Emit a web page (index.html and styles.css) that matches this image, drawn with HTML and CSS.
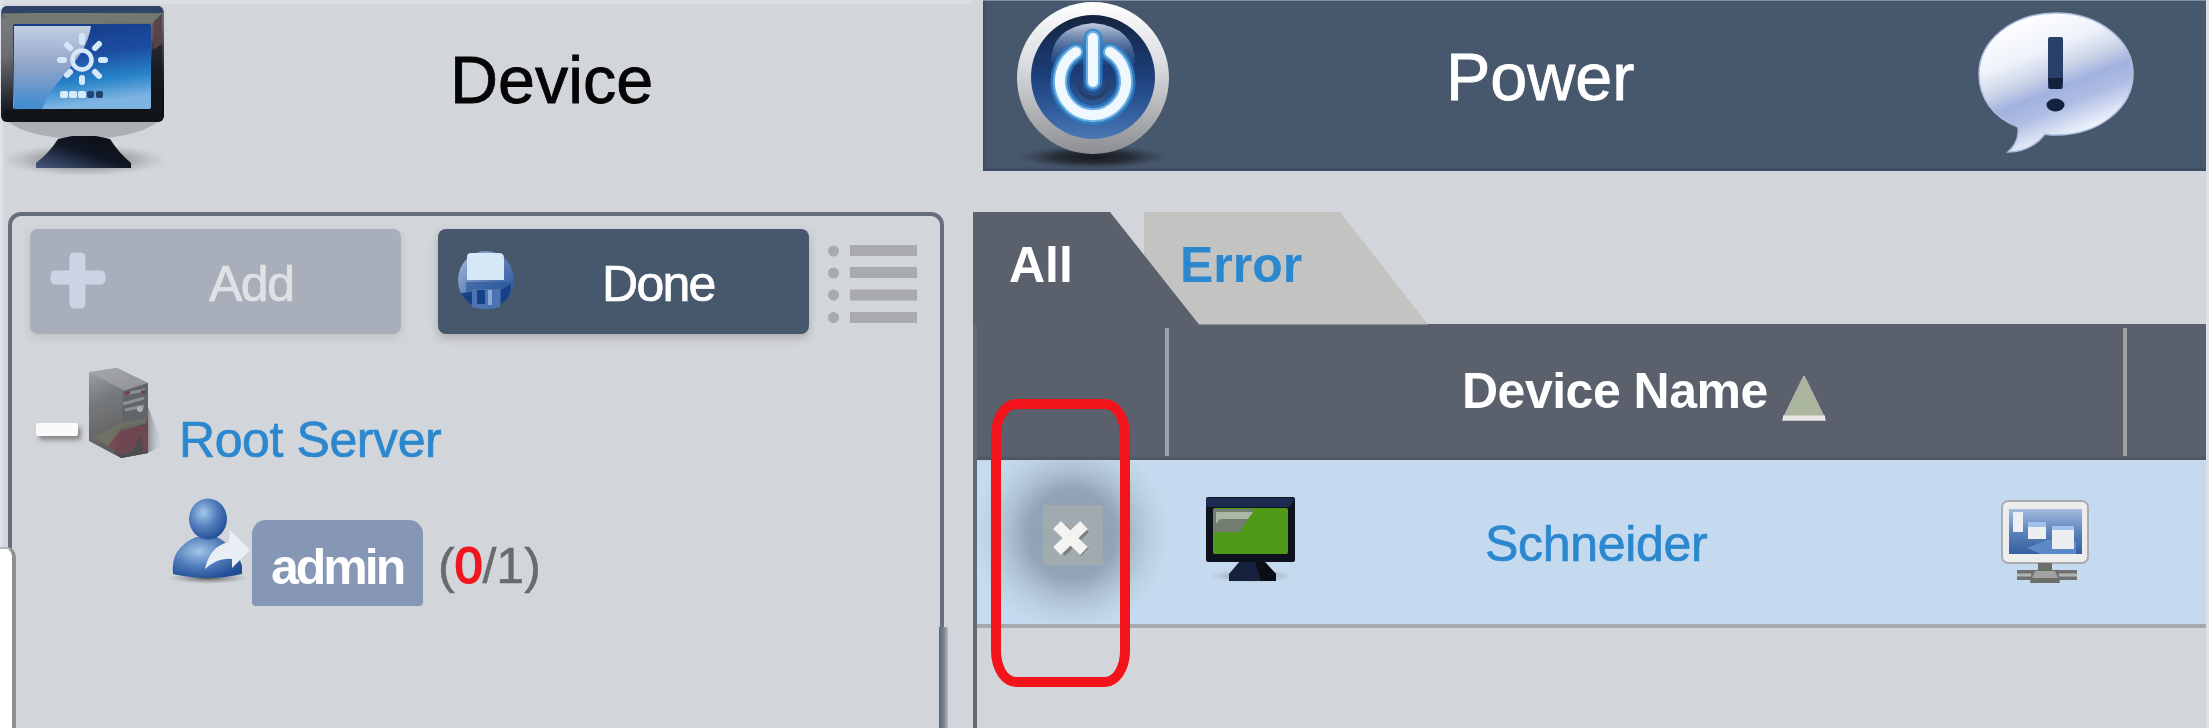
FILE: index.html
```
<!DOCTYPE html>
<html lang="en">
<head>
<meta charset="utf-8">
<title>Device</title>
<link rel="stylesheet" href="styles.css">
</head>
<body>
<main class="app">
  <section class="left">
    <header class="device-head">
      <svg class="device-icon" width="170" height="180" viewBox="0 0 170 180">
        <defs>
          <linearGradient id="frame" x1="0" y1="0" x2="0.3" y2="1"><stop offset="0" stop-color="#34466b"/><stop offset=".12" stop-color="#777a80"/><stop offset=".4" stop-color="#6b6d70"/><stop offset=".8" stop-color="#1c2028"/><stop offset="1" stop-color="#0c0e12"/></linearGradient>
          <linearGradient id="scr" x1="0" y1="0" x2=".2" y2="1"><stop offset="0" stop-color="#153a83"/><stop offset=".45" stop-color="#1c4da2"/><stop offset=".75" stop-color="#2884c8"/><stop offset="1" stop-color="#7db4e2"/></linearGradient>
          <linearGradient id="glare" x1="0" y1="0" x2="0" y2="1"><stop offset="0" stop-color="#c3cfe2"/><stop offset=".5" stop-color="#8ea2c9"/><stop offset="1" stop-color="#3b8cd0"/></linearGradient>
          <linearGradient id="foot" x1="0" y1="1" x2="1" y2="0"><stop offset="0" stop-color="#465a80"/><stop offset=".5" stop-color="#101724"/><stop offset="1" stop-color="#0a0c10"/></linearGradient>
          <radialGradient id="shade"><stop offset="0" stop-color="#333" stop-opacity=".8"/><stop offset="1" stop-color="#777" stop-opacity="0"/></radialGradient>
        </defs>
        <ellipse cx="84" cy="160" rx="82" ry="16" fill="url(#shade)"/>
        <path d="M6 120H160Q140 138 83 139Q26 138 6 120Z" fill="#abb0b3"/>
        <path d="M58 139L72 136H96L110 139Q118 152 131 163V168H36V163Q50 152 58 139Z" fill="url(#foot)"/>
        <rect x="1" y="6" width="163" height="116" rx="6" fill="url(#frame)"/>
        <path d="M2 13Q2 6 8 6H158Q163 6 163 13Z" fill="#2f4268"/>
        <path d="M3 14H161L152 23H12Z" fill="#74796f"/>
        <path d="M154 22L162 14V116H148Z" fill="#15181c" opacity=".7"/>
        <path d="M152 24L162 15V44L153 50Z" fill="#6d4e54" opacity=".7"/>
        <rect x="3" y="110" width="160" height="12" rx="5" fill="#101318"/>
        <rect x="13" y="24" width="138" height="85" rx="2" fill="url(#scr)"/>
        <path d="M14 26H91C86 62 54 77 42 109H14Z" fill="url(#glare)"/>
        <g stroke="#d5e8fa" stroke-linecap="round" fill="none"><circle cx="82" cy="60" r="9.500" stroke-width="4.500"/><path stroke-width="6" d="M82 36V42M82 78V82M60 60H64M101 60H105M67 45L70 48M95 72L99 76M67 75L70 72M95 48L99 44"/></g>
        <g fill="#d8ebfa"><rect x="60" y="91" width="8" height="7" rx="2"/><rect x="69" y="91" width="8" height="7" rx="2"/><rect x="78" y="91" width="8" height="7" rx="2"/></g>
        <g fill="#25416d"><rect x="87" y="91" width="7" height="7" rx="2"/><rect x="96" y="91" width="7" height="7" rx="2"/></g>
      </svg>
      <h1 class="title">Device</h1>
    </header>
    <div class="panel">
      <div class="toolbar">
        <div class="btn btn-off">
          <svg class="btn-icon" width="58" height="60" viewBox="0 0 58 60"><path d="M21 7Q21 3 25 3H32Q36 3 36 7V21H52Q56 21 56 26V29Q56 34 52 34H36V53Q36 58 32 58H25Q21 58 21 53V34H6Q2 34 2 29V26Q2 21 6 21H21Z" fill="#ccd4e6" stroke="#ccd4e6" stroke-width="1"/></svg>
          <span class="lbl lbl-add">Add</span>
        </div>
        <div class="btn btn-on">
          <svg class="btn-icon" width="58" height="60" viewBox="0 0 58 60"><defs><linearGradient id="flop" x1="0" y1="0" x2="1" y2="1"><stop offset="0" stop-color="#a9bee0"/><stop offset=".5" stop-color="#5c7cb4"/><stop offset="1" stop-color="#174a97"/></linearGradient></defs>
          <ellipse cx="29" cy="30" rx="28" ry="29" fill="url(#flop)"/><rect x="9" y="32" width="44" height="11" fill="#285798" opacity=".6"/><path d="M10 7Q10 3 14 3H42Q47 3 47 8V30H10Z" fill="#d6e7f7"/><path d="M15 39H43V57Q29 61 15 57Z" fill="#4c73b2"/><path d="M20 40H28V54H20Z" fill="#174187"/><path d="M31 40H35V55H31Z" fill="#8faad2"/><path d="M4 43L15 42V55Q8 51 4 43ZM44 40L54 34Q54 48 44 54Z" fill="#174187"/></svg>
          <span class="lbl lbl-done">Done</span>
        </div>
        <svg class="list-icon" width="92" height="80" viewBox="0 0 92 80" fill="#a8aaaf"><circle cx="5.500" cy="6" r="5.500"/><circle cx="5.500" cy="28" r="5.500"/><circle cx="5.500" cy="50" r="5.500"/><circle cx="5.500" cy="72.500" r="5.500"/><rect x="22" width="67" height="11"/><rect x="22" y="22" width="67" height="11"/><rect x="22" y="44.500" width="67" height="11"/><rect x="22" y="67" width="67" height="11"/></svg>
      </div>
      <div class="tree-root">
        <span class="minus"></span>
        <svg class="server" width="80" height="96" viewBox="0 0 80 96"><defs><linearGradient id="sv" x1="0" y1="0" x2=".3" y2="1"><stop offset="0" stop-color="#a1a3a5"/><stop offset=".4" stop-color="#75787b"/><stop offset="1" stop-color="#5d5b58"/></linearGradient><linearGradient id="svs"><stop offset="0" stop-color="#8f9195"/><stop offset="1" stop-color="#c8cace" stop-opacity="0"/></linearGradient></defs><path d="M59 40L74 78L59 86Z" fill="url(#svs)"/><path d="M0 5L28 1L59 16V86L32 91L0 74Z" fill="url(#sv)"/><path d="M0 5L28 1L59 16L36 24Z" fill="#aaacad" opacity=".6"/><path d="M34 24L59 16V86L32 91Z" fill="#626569"/><path d="M31 60L59 53V86L32 91L26 86Z" fill="#4c4b4f"/><path d="M36 27L56 23M34 37L55 31M36 43L55 39" stroke="#8c9092" stroke-width="3"/><path d="M36 27L41 25M52 25H57" stroke="#773f48" stroke-width="3"/><path d="M4 70L30 57L58 51V56L32 64L19 79Z" fill="#707664" opacity=".8"/><path d="M19 79L31 63L57 58V52L59 50V84L54 86L52 66L44 84L32 88Z" fill="#7a4650" opacity=".75"/><circle cx="51" cy="42" r="3" fill="#aab0b5"/></svg>
        <span class="lbl root-name">Root Server</span>
      </div>
      <div class="tree-user">
        <svg class="person" width="84" height="88" viewBox="0 0 84 88"><defs><radialGradient id="ball" cx=".38" cy=".35" r=".7"><stop offset="0" stop-color="#a2c8ea"/><stop offset=".5" stop-color="#557fbd"/><stop offset="1" stop-color="#1f4c94"/></radialGradient></defs><ellipse cx="40" cy="80" rx="40" ry="6" fill="url(#shade)"/><path d="M5 76Q2 50 28 39H49Q69 50 74 68V76Q40 84 5 76Z" fill="url(#ball)"/><ellipse cx="40" cy="21" rx="19" ry="20.500" fill="url(#ball)"/><path d="M62 32L82 52L64 70V61Q50 59 37 71Q42 48 61 44Z" fill="#e9eef5"/></svg>
        <span class="badge">admin</span>
        <span class="count">(<b>0</b>/1)</span>
      </div>
    </div>
    <div class="scrollbar"></div>
    <div class="flap"></div>
  </section>
  <section class="right">
    <header class="power-head">
      <svg class="power-icon" width="170" height="170" viewBox="0 0 170 170"><defs>
        <linearGradient id="ring" x1="0" y1="0" x2="0" y2="1"><stop offset="0" stop-color="#fff"/><stop offset=".4" stop-color="#dcdde2"/><stop offset="1" stop-color="#8c8e91"/></linearGradient>
        <linearGradient id="disc" x1="0" y1="0" x2="0" y2="1"><stop offset="0" stop-color="#14243f"/><stop offset=".5" stop-color="#1d3f7c"/><stop offset=".8" stop-color="#34609f"/><stop offset="1" stop-color="#4c78b3"/></linearGradient>
        <radialGradient id="drop"><stop offset="0" stop-color="#17191f"/><stop offset=".5" stop-color="#1f232b" stop-opacity=".8"/><stop offset="1" stop-color="#2c3644" stop-opacity="0"/></radialGradient>
        <linearGradient id="gloss" x1="0" y1="0" x2="0" y2="1"><stop offset="0" stop-color="#c3cde0"/><stop offset="1" stop-color="#2b5fa8" stop-opacity=".3"/></linearGradient></defs>
        <ellipse cx="84" cy="156" rx="76" ry="12" fill="url(#drop)"/>
        <circle cx="84" cy="77" r="76" fill="url(#ring)"/><circle cx="84" cy="76" r="62" fill="url(#disc)"/>
        <path d="M42 62Q42 26 84 22Q126 26 126 62Q84 66 42 62Z" fill="url(#gloss)"/>
        <g fill="none" stroke-linecap="round"><path d="M67 51A33 34 0 1 0 101 51M84 37V81" stroke="#2d84cc" stroke-width="19" opacity=".75"/><path d="M67 51A33 34 0 1 0 101 51M84 37V81" stroke="#7cbdec" stroke-width="14" opacity=".8"/><path d="M67 51A33 34 0 1 0 101 51M84 37V81" stroke="#eff8ff" stroke-width="10"/></g>
        <path d="M68 78Q70 96 84 97Q98 96 100 78" fill="none" stroke="#27406b" stroke-width="4"/>
      </svg>
      <h2 class="title title-power">Power</h2>
      <svg class="bubble" width="162" height="150" viewBox="0 0 162 150"><defs><linearGradient id="bub" gradientUnits="userSpaceOnUse" x1="50" y1="5" x2="98" y2="125"><stop offset="0" stop-color="#fff"/><stop offset=".3" stop-color="#eef2fa"/><stop offset=".48" stop-color="#cdd5e9"/><stop offset=".62" stop-color="#a2b2df"/><stop offset=".76" stop-color="#adbce3"/><stop offset="1" stop-color="#f0f4fb"/></linearGradient></defs><path d="M81 3C124 3 158 30 158 64S124 125 81 125Q73 125 70 124Q56 142 33 142Q45 131 43 117C18 107 4 88 4 64C4 30 38 3 81 3Z" fill="url(#bub)" stroke="#aebfdf" stroke-width="1.500"/><rect x="73" y="27" width="15" height="52" rx="2" fill="#273f69"/><path d="M73 68H88L86 79H75Z" fill="#13213c"/><ellipse cx="80.500" cy="95" rx="9" ry="6.500" fill="#14223d"/></svg>
    </header>
    <div class="grid">
      <nav class="tabs">
        <svg class="tab-shapes" width="470" height="113" viewBox="0 0 470 113"><path d="M171 0H367L455 112.500H171Z" fill="#c3c3c2"/><path d="M0 0H137L226 112.500V113H0Z" fill="#5a616c"/></svg>
        <span class="lbl tab-all">All</span><span class="lbl tab-error">Error</span>
      </nav>
      <div class="thead">
        <div class="th th-sel"></div>
        <div class="th th-name"><span class="lbl">Device Name</span><svg width="44" height="46" viewBox="0 0 44 46"><path d="M22 0L43.500 44H.5Z" fill="#abb69f" stroke="#b3b0ae" stroke-width="1.500"/><rect x="1" y="39.500" width="42" height="5" fill="#e9e7e6"/></svg></div>
      </div>
      <div class="row">
        <div class="cell-sel"><svg width="60" height="60" viewBox="0 0 60 60"><rect width="60" height="60" fill="#a4abad" opacity=".85"/><path d="M18 23L42 47M42 23L18 47" stroke="#7b8085" stroke-width="11"/><path d="M14 20L41 46M41 20L14 46" stroke="#f3f3f2" stroke-width="11"/></svg></div>
        <svg class="mon" width="90" height="86" viewBox="0 0 90 86"><ellipse cx="45" cy="79" rx="43" ry="7" fill="url(#shade)" opacity=".6"/><path d="M34 64H58L70 77V84H23V77Z" fill="#15213d"/><path d="M49 64H58L70 77V84H55Z" fill="#0b0e14"/><rect width="89" height="65" rx="2" fill="#0d121e"/><path d="M0 1H89L84 10H0Z" fill="#1b2b4f"/><rect x="7" y="11" width="75" height="46" rx="2" fill="#4f9a17"/><path d="M7 12H48L34 35H7Z" fill="#727c70"/><path d="M10 15H47L42 22H14L10 27Z" fill="#acb7a3"/></svg>
        <span class="lbl name">Schneider</span>
        <svg class="net" width="88" height="86" viewBox="0 0 88 86"><defs><linearGradient id="ns" x1="0" y1="0" x2="0" y2="1"><stop offset="0" stop-color="#a5bce0"/><stop offset=".5" stop-color="#5b83bd"/><stop offset="1" stop-color="#355f9f"/></linearGradient></defs><rect x="1" y="1" width="86" height="62" rx="6" fill="#ededed" stroke="#a9acb0" stroke-width="2"/><rect x="8" y="9" width="73" height="45" fill="url(#ns)"/><path d="M26 48L46 40L75 42V54H40Z" fill="#6294cf" opacity=".8"/><path d="M12 12H22V32H12ZM27 22H45V39H27ZM51 26H73V49H51Z" fill="#eceef1"/><path d="M27 22H45V27H27ZM51 26H73V30H51Z" fill="#9fc0e8"/><path d="M16 72H76M16 78H76" stroke="#6f7172" stroke-width="4"/><path d="M16 75H76" stroke="#b5b3b2" stroke-width="3"/><path d="M37 63H51V70H57L59 83H29L31 70H37Z" fill="#6c6f69"/><path d="M34 71H54L57 78H31Z" fill="#a3a3a3"/></svg>
      </div>
      <div class="callout"></div>
    </div>
  </section>
</main>
</body>
</html>
```
FILE: styles.css
```
* { box-sizing: border-box; }
body { margin: 0; background: #d2d5da; font-family: "Liberation Sans", Arial, sans-serif; }
.app { display: flex; width: 2209px; height: 728px; overflow: hidden; border-right: 3px solid #dde1e7; }
h1, h2 { margin: 0; font-weight: 400; }
.lbl { font-size: 50px; line-height: 56px; white-space: nowrap; -webkit-text-stroke: .7px currentColor; }
.title { font-size: 66.500px; line-height: 76px; -webkit-text-stroke: .8px currentColor; }

.left { position: relative; width: 973px; display: flex; flex-direction: column; flex: none; border-left: 3px solid #dfe3e9; }
.device-head { height: 212px; display: flex; flex: none; border-top: 4px solid #dbdee3; }
.device-icon { margin: -4px 0 0 -3px; flex: none; }
.device-head .title { margin: 38px 0 0 280px; color: #050505; }
.panel { width: 936px; height: 516px; flex: none; margin-left: 5px; border: 4px solid #656e7a; border-bottom: 0; border-radius: 13px 13px 0 0; }
.toolbar { display: flex; padding: 13px 0 0 18px; height: 131px; }
.btn { width: 371px; height: 105px; border-radius: 8px; display: flex; box-shadow: 0 4px 8px rgba(90, 80, 70, .3); flex: none; }
.btn-off { background: #a9afba; color: #dfe2e5; box-shadow: 0 3px 8px rgba(90, 80, 70, .15); }
.btn-on { background: #48586c; color: #fff; margin-left: 37px; }
.btn-icon { margin: 21px 0 0 19px; flex: none; }
.btn .lbl { margin-top: 27px; }
.lbl-add { margin-left: 102px; letter-spacing: -1.500px; }
.lbl-done { margin-left: 87px; letter-spacing: -1.700px; }
.list-icon { margin: 16px 0 0 19px; }
.tree-root { display: flex; height: 130px; padding-left: 24px; }
.minus { width: 42px; height: 13px; margin-top: 76px; background: #fafafa; border-radius: 2px; box-shadow: 3px 4px 4px rgba(70, 60, 60, .5); flex: none; }
.server { margin: 20px 0 0 11px; flex: none; }
.root-name { margin: 65px 0 0 10px; color: #2c88ce; letter-spacing: -.4px; }
.tree-user { display: flex; padding-left: 156px; }
.person { margin-top: 21px; flex: none; }
.badge { width: 171px; height: 86px; margin-top: 43px; padding: 19px 0 0 19px; background: #8597b5; border-radius: 14px 14px 4px 4px; color: #fff; font-size: 50px; font-weight: 700; line-height: 56px; letter-spacing: -3px; flex: none; }
.count { margin: 61px 0 0 15px; font-size: 50px; line-height: 56px; color: #696a6c; -webkit-text-stroke: .5px #696a6c; }
.count b { color: #ef1620; font-weight: 400; -webkit-text-stroke: 2px #ef1620; }
.scrollbar { position: absolute; left: 936px; top: 627px; width: 9px; height: 101px; background: linear-gradient(90deg, #596676, #7b8591 55%, #b4b9c0); }
.flap { position: absolute; left: -3px; top: 547px; width: 16px; height: 190px; background: #fff; border-right: 4px solid #8e9090; border-top: 2px solid #b4b6b8; border-radius: 0 10px 0 0; }

.right { width: 1236px; display: flex; flex-direction: column; flex: none; }
.power-head { height: 171px; flex: none; margin-left: 10px; padding-left: 25px; background: #48586c; border-top: 1px solid #8090a0; display: flex; box-shadow: inset 0 -4px 2px -1px #3d4c61, inset 3px 0 2px -1px #3d4c61; }
.power-icon { flex: none; margin: 0 0 0 1px; }
.title-power { margin: 38px 0 0 267px; color: #fff; }
.bubble { margin: 9px 0 0 340px; flex: none; }
.grid { position: relative; margin-top: 41px; height: 516px; }
.grid::before { content: ""; position: absolute; left: 0; top: 0; width: 4px; height: 517px; background: #626b78; }
.tabs { position: relative; height: 112px; display: flex; font-weight: 700; }
.tab-shapes { position: absolute; left: 0; top: 0; }
.tabs .lbl, .th-name .lbl { -webkit-text-stroke: 0; }
.tabs .lbl { position: relative; margin-top: 25px; }
.tab-all { color: #fff; margin-left: 36px; }
.tab-error { color: #2c88ce; margin-left: 107px; }
.thead { height: 136px; background: #5a616c; display: flex; padding: 4px 0; color: #fff; font-weight: 700; box-shadow: inset 0 -3px 2px #4e5763; }
.th { border-right: 4px solid #a0a3a6; }
.th-sel { width: 196px; flex: none; }
.th-name { width: 958px; flex: none; display: flex; padding: 35px 0 0 293px; }
.th-name .lbl { letter-spacing: -.5px; }
.th-name svg { margin: 13px 0 0 14px; }
.row { height: 168px; margin-left: 4px; background: #c5daee; border-bottom: 4px solid #a6a9ad; display: flex; }
.cell-sel { width: 194px; flex: none; padding: 45px 0 0 66px; background: radial-gradient(circle 98px at 95px 74px, #8b9eb2 0, #92a5b8 45%, #aec1d3 66%, #bdd3e3 84%, rgba(197, 218, 238, 0) 100%); }
.mon { margin: 37px 0 0 35px; flex: none; }
.name { color: #2c88ce; margin: 56px 0 0 189px; width: 260px; letter-spacing: -.3px; }
.net { margin: 40px 0 0 256px; flex: none; }
.callout { position: absolute; left: 18px; top: 187px; width: 139px; height: 288px; border: 10px solid #f3131b; border-radius: 25px / 36px; }
```
